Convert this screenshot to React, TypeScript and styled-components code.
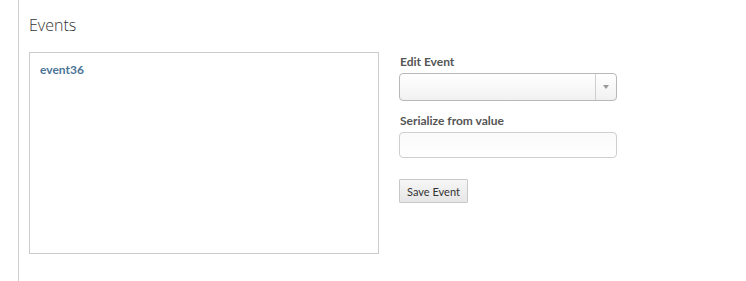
import React from "react";
import styled, { createGlobalStyle } from "styled-components";

const Global = createGlobalStyle`
  html, body { margin: 0; padding: 0; background: #fff; }
  body { font-family: "Open Sans", "Lato", sans-serif; }
`;

const Page = styled.div`
  height: 281px;
  margin-left: 18px;
  border-left: 1px solid #d0d0d0;
  padding-left: 10px;
  box-sizing: border-box;
`;

const Title = styled.h1`
  margin: 0;
  padding-top: 14px;
  font-family: "Open Sans", sans-serif;
  font-weight: 300;
  font-size: 16px;
  line-height: 22px;
  color: #333;
`;

const Row = styled.div`
  display: flex;
  gap: 20px;
  margin-top: 16px;
`;

const ListBox = styled.div`
  width: 350px;
  height: 202px;
  box-sizing: border-box;
  border: 1px solid #cccccc;
  padding: 9px 10px;
`;

const ListItem = styled.div`
  font-family: "Lato", sans-serif;
  font-weight: 700;
  font-size: 12px;
  line-height: 16px;
  color: #4b7597;
`;

const Form = styled.div`
  display: flex;
  flex-direction: column;
  width: 218px;
`;

const Label = styled.label<{ $top?: number }>`
  display: block;
  font-family: "Lato", sans-serif;
  font-weight: 700;
  font-size: 12px;
  line-height: 16px;
  color: #555;
  margin-top: ${(p) => p.$top ?? 0}px;
  margin-bottom: 3px;
  padding-left: 1px;
`;

const Select = styled.div`
  height: 28px;
  box-sizing: border-box;
  border: 1px solid #b8b8b8;
  border-radius: 4px;
  background: linear-gradient(#ffffff, #f1f1f1);
  display: flex;
  justify-content: flex-end;
`;

const Arrow = styled.div`
  width: 20px;
  border-left: 1px solid #cfcfcf;
  display: flex;
  align-items: center;
  justify-content: center;
  &::after {
    content: "";
    border-left: 3px solid transparent;
    border-right: 3px solid transparent;
    border-top: 4px solid #999;
  }
`;

const Input = styled.div`
  height: 26px;
  box-sizing: border-box;
  border: 1px solid #cfcfcf;
  border-radius: 4px;
  background: linear-gradient(#fafafa, #ffffff);
`;

const Button = styled.button`
  margin-top: 21px;
  align-self: flex-start;
  height: 24px;
  width: 69px;
  padding: 0;
  border: 1px solid #c8c8c8;
  border-radius: 1px;
  background: linear-gradient(#f6f6f6, #e6e6e6);
  font-family: "Lato", sans-serif;
  font-size: 11px;
  color: #333;
`;

export default function App() {
  return (
    <>
      <Global />
      <Page>
        <Title>Events</Title>
        <Row>
          <ListBox>
            <ListItem>event36</ListItem>
          </ListBox>
          <Form>
            <Label $top={2}>Edit Event</Label>
            <Select>
              <Arrow />
            </Select>
            <Label $top={12}>Serialize from value</Label>
            <Input />
            <Button>Save Event</Button>
          </Form>
        </Row>
      </Page>
    </>
  );
}
